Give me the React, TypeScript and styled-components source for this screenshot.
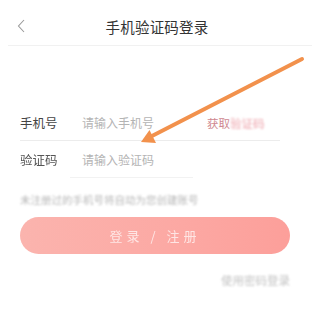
import styled, { createGlobalStyle } from "styled-components";

const Global = createGlobalStyle`
  html, body {
    margin: 0;
    padding: 0;
    background: #fff;
  }
  body {
    font-family: "Noto Sans CJK SC", "Noto Sans", sans-serif;
  }
`;

const Screen = styled.div`
  position: relative;
  width: 320px;
  height: 328px;
  overflow: hidden;
  background: #fff;
  display: flex;
  flex-direction: column;
`;

const StatusBar = styled.div`
  height: 8px;
`;

const Header = styled.div`
  position: relative;
  height: 37px;
  display: flex;
  align-items: center;
  justify-content: center;
  border-bottom: 1px solid #f1f1f1;
  margin: 0 8px;
`;

const Back = styled.div`
  position: absolute;
  left: 9px;
  top: 11px;
  display: flex;
`;

const Title = styled.div`
  font-size: 14.5px;
  color: #333;
  letter-spacing: 0.2px;
  margin-left: -6px;
`;

const Form = styled.div`
  display: flex;
  flex-direction: column;
  padding: 0 20px;
  margin-top: 58px;
`;

const Row = styled.div<{ $line: string; $lineLeft?: number; $lineRight?: number }>`
  position: relative;
  height: 37px;
  display: flex;
  align-items: center;
  &::after {
    content: "";
    position: absolute;
    left: ${(p) => p.$lineLeft ?? 0}px;
    right: ${(p) => p.$lineRight ?? 0}px;
    bottom: 0;
    height: 1px;
    background: ${(p) => p.$line};
  }
`;

const Label = styled.div<{ $soft?: boolean }>`
  width: 62px;
  font-size: 12.5px;
  color: #444;
  ${(p) => (p.$soft ? "filter: blur(0.4px); color: #555;" : "")}
`;

const Placeholder = styled.div`
  flex: 1;
  font-size: 12px;
  color: #b4b4b4;
`;

const GetCode = styled.div`
  width: 93px;
  font-size: 11.5px;
  color: #cf8890;
  span {
    filter: blur(1.2px);
    color: #eea4ac;
  }
`;

const Hint = styled.div`
  margin-top: 14px;
  font-size: 10.5px;
  color: #b8b8b8;
  filter: blur(0.8px);
`;

const Button = styled.div`
  margin-top: 10px;
  width: 270px;
  height: 37px;
  border-radius: 19px;
  background: linear-gradient(90deg, #fbb4ae 0%, #fca8a3 60%, #fc9f9a 100%);
  display: flex;
  align-items: center;
  justify-content: center;
  filter: blur(0.6px);
`;

const ButtonText = styled.div`
  font-size: 13px;
  color: rgba(255, 255, 255, 0.7);
  margin-left: 0;
  letter-spacing: 4px;
  filter: blur(0.6px);
`;

const Footer = styled.div`
  margin-top: 18px;
  width: 270px;
  display: flex;
  justify-content: flex-end;
`;

const SwitchLink = styled.div`
  font-size: 11.5px;
  color: #c2c2c2;
  filter: blur(1px);
`;

const Overlay = styled.svg`
  position: absolute;
  left: 0;
  top: 0;
  pointer-events: none;
`;

export default function App() {
  return (
    <>
      <Global />
      <Screen>
        <StatusBar />
        <Header>
          <Back>
            <svg width="8" height="14" viewBox="0 0 8 14">
              <path d="M7 1 L1.5 7 L7 13" fill="none" stroke="#9a9a9a" strokeWidth="1.1" />
            </svg>
          </Back>
          <Title>手机验证码登录</Title>
        </Header>
        <Form>
          <Row $line="#ececec" $lineRight={20}>
            <Label>手机号</Label>
            <Placeholder>请输入手机号</Placeholder>
            <GetCode>
              获取<span>验证码</span>
            </GetCode>
          </Row>
          <Row $line="#f2f2f2" $lineLeft={50} $lineRight={107}>
            <Label $soft>验证码</Label>
            <Placeholder>请输入验证码</Placeholder>
          </Row>
          <Hint>未注册过的手机号将自动为您创建账号</Hint>
          <Button>
            <ButtonText>登录 / 注册</ButtonText>
          </Button>
          <Footer>
            <SwitchLink>使用密码登录</SwitchLink>
          </Footer>
        </Form>
        <Overlay width="320" height="328" viewBox="0 0 320 328">
          <line x1="302" y1="59" x2="151" y2="136.5" stroke="#f2914c" strokeWidth="4" strokeLinecap="round" />
          <polygon points="141,142 156,143 149.5,130" fill="#f2914c" />
        </Overlay>
      </Screen>
    </>
  );
}
